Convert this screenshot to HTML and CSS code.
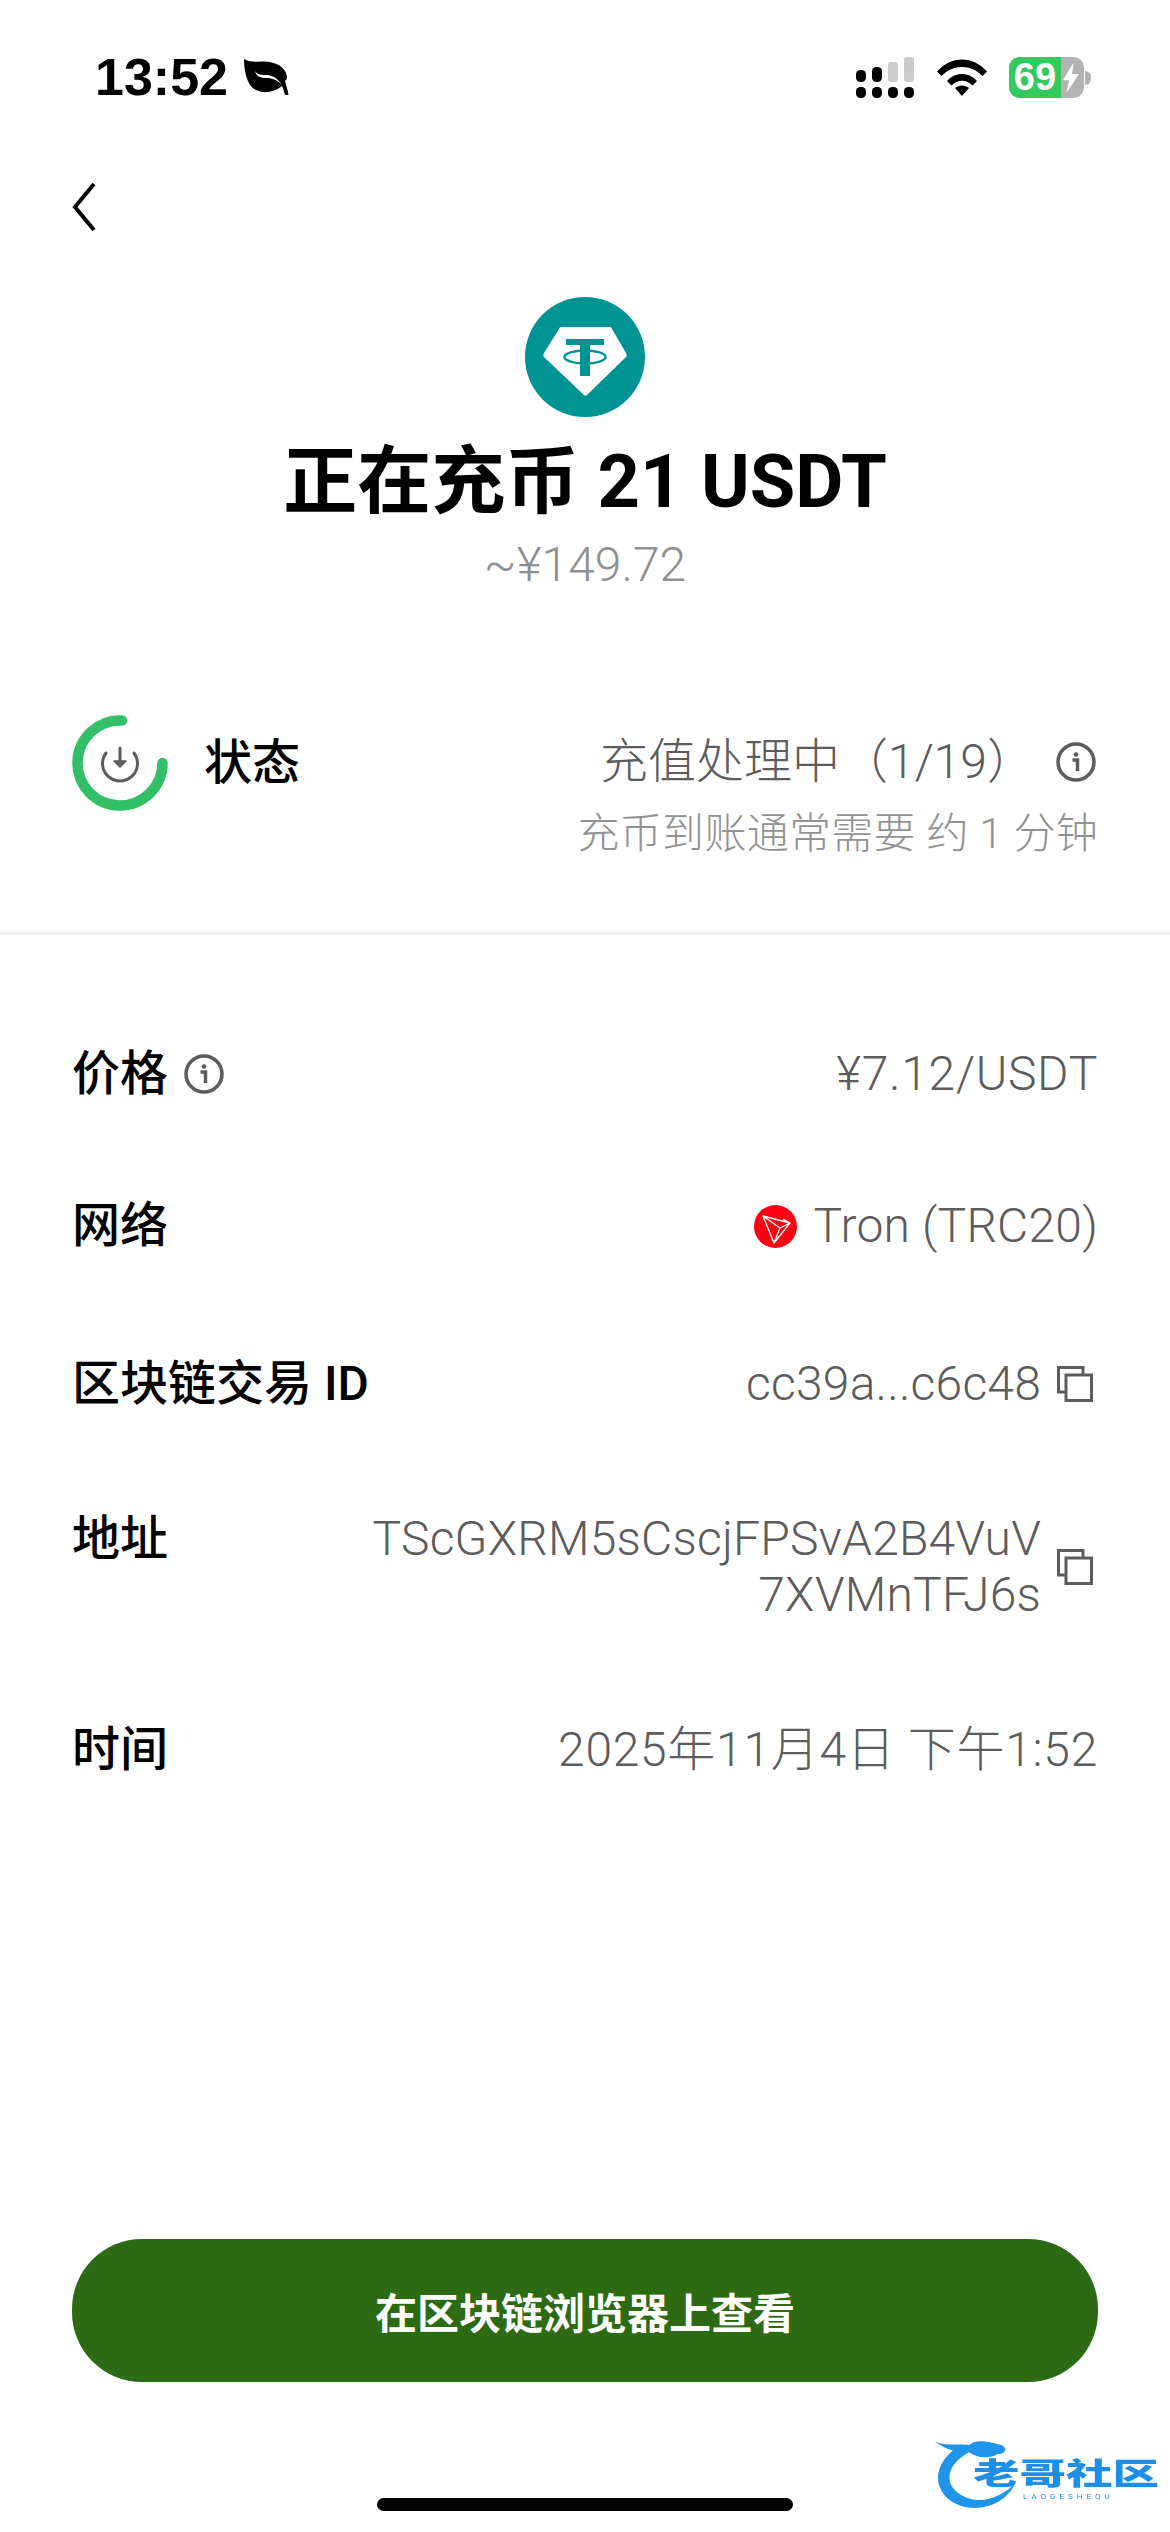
FILE: index.html
```html
<!DOCTYPE html>
<html lang="zh-CN">
<head>
	<meta charset="utf-8">
	<title>正在充币</title>
	<link rel="stylesheet" href="styles.css">
</head>
<body>
	<div class="page">

		<div class="statusbar">
			<div class="clock">
				<span class="clock-time">13:52</span>
				<svg class="leaf" viewBox="0 0 45 37"><path d="M0 0C5 3 10 3 18 2.500C30 2 42 7 43 18C43 20 42 21 41 22C42 26 44 31 44.500 36L41 36C40 33 40 31 38 27C30 34 18 35 10 30C3 25 0 12 0 0ZM11 12C13 16 18 16 24 16C30 17 34 20 38 26C33 21 29 19 22 19C16 19 12 17 11 12Z" fill="#000" fill-rule="evenodd"/></svg>
			</div>
			<div class="status-icons">
				<svg class="signal" viewBox="0 0 58 41">
					<rect x="0" y="13" width="10" height="12" rx="4.500" fill="#000"/>
					<rect x="16" y="10" width="10" height="15" rx="4.500" fill="#000"/>
					<rect x="32" y="5" width="10" height="20" rx="3" fill="#ccc"/>
					<rect x="48" y="0" width="10" height="25" rx="3" fill="#ccc"/>
					<rect x="0" y="30" width="10" height="11" rx="4.500" fill="#000"/>
					<rect x="16" y="30" width="10" height="11" rx="4.500" fill="#000"/>
					<rect x="32" y="30" width="10" height="11" rx="4.500" fill="#000"/>
					<rect x="48" y="30" width="10" height="11" rx="4.500" fill="#000"/>
				</svg>
				<svg class="wifi" viewBox="0 0 50 37">
					<path d="M0 12.500C14 -3.500 36 -3.500 50 12.500L45.500 17C34 5 16 5 4.500 17Z" fill="#000"/>
					<path d="M10 22C18 12.500 32 12.500 40 22L35.500 26.500C29.500 20 20.500 20 14.500 26.500Z" fill="#000"/>
					<path d="M18 29C22 25.500 28 25.500 32 29L25 37Z" fill="#000"/>
				</svg>
				<div class="battery">
					<div class="battery-body">
						<div class="battery-fill">69</div>
						<svg class="bolt" viewBox="0 0 20 34"><path d="M13 0L1 20L8 20L5 34L19 13L11 13Z" fill="#fff"/></svg>
					</div>
					<div class="battery-nub"></div>
				</div>
			</div>
		</div>

		<div class="nav">
			<svg class="back" viewBox="0 0 24 48"><path d="M22 1L3 24L22 47" fill="none" stroke="#000" stroke-width="4"/></svg>
		</div>

		<div class="hero">
			<svg class="coin" viewBox="0 0 120 120">
				<circle cx="60" cy="60" r="60" fill="#009393"/>
				<path d="M36 30L85 30C86 30 87 31 87 32L101 56C102 58 102 59 101 60L62 98C61 99 60 99 59 98L19 60C18 59 18 58 19 56L34 32C34 31 35 30 36 30Z" fill="#fff"/>
				<path d="M41 42H79V48H65V79H55V48H41Z" fill="#009393"/>
				<ellipse cx="60" cy="60" rx="20.500" ry="6.500" fill="none" stroke="#009393" stroke-width="2.500"/>
			</svg>
			<h1 class="hero-title">正在充币 21 USDT</h1>
			<div class="hero-sub">~¥149.72</div>
		</div>

		<div class="state">
			<div class="state-left">
				<svg class="ring" viewBox="0 0 96 96">
					<path d="M50 5.500A42.500 42.500 0 1 0 90.500 48" fill="none" stroke="#32bf67" stroke-width="10.500" stroke-linecap="round"/>
					<path d="M34 38A17.500 17.500 0 1 0 62 38" fill="none" stroke="#5c5c5c" stroke-width="3" stroke-linecap="round"/>
					<path d="M48 33V50" fill="none" stroke="#5c5c5c" stroke-width="3" stroke-linecap="round"/>
					<path d="M42 46H54L48 52Z" fill="#5c5c5c" stroke="#5c5c5c" stroke-width="1.500" stroke-linejoin="round"/>
				</svg>
				<span class="state-label">状态</span>
			</div>
			<div class="state-right">
				<div class="state-value">
					<span>充值处理中（1/19）</span>
					<svg class="info" viewBox="0 0 40 40">
						<circle cx="20" cy="20" r="18" fill="none" stroke="#5c5c5c" stroke-width="3.500"/>
						<circle cx="20" cy="12.500" r="2.300" fill="#5c5c5c"/>
						<path d="M16.500 18H21.500V29" fill="none" stroke="#5c5c5c" stroke-width="3.500"/>
					</svg>
				</div>
				<div class="state-note">充币到账通常需要 约 1 分钟</div>
			</div>
		</div>

		<div class="divider"></div>

		<div class="details">
			<div class="row">
				<div class="row-label">
					<span>价格</span>
					<svg class="info" viewBox="0 0 40 40">
						<circle cx="20" cy="20" r="18" fill="none" stroke="#5c5c5c" stroke-width="3.500"/>
						<circle cx="20" cy="12.500" r="2.300" fill="#5c5c5c"/>
						<path d="M16.500 18H21.500V29" fill="none" stroke="#5c5c5c" stroke-width="3.500"/>
					</svg>
				</div>
				<div class="row-value row-value-wide">¥7.12/USDT</div>
			</div>
			<div class="row row-network">
				<div class="row-label">网络</div>
				<div class="row-value">
					<svg class="tron" viewBox="0 0 43 43">
						<circle cx="21.500" cy="21.500" r="21.500" fill="#ff0013"/>
						<path d="M9 11L36 18L20 38ZM9 11L26 23L36 18M26 23L20 38M29 14L36 18" fill="none" stroke="#fff" stroke-width="1.300" stroke-linejoin="round"/>
					</svg>
					<span>Tron (TRC20)</span>
				</div>
			</div>
			<div class="row">
				<div class="row-label">区块链交易 ID</div>
				<div class="row-value">
					<span>cc39a...c6c48</span>
					<svg class="copy" viewBox="0 0 36 36">
						<path d="M8 26H1.500V1.500H26V8" fill="none" stroke="#5c5c5c" stroke-width="3"/>
						<rect x="9" y="9" width="25.500" height="25.500" fill="none" stroke="#5c5c5c" stroke-width="3"/>
					</svg>
				</div>
			</div>
			<div class="row">
				<div class="row-label">地址</div>
				<div class="row-value">
					<span class="address">TScGXRM5sCscjFPSvA2B4VuV<br>7XVMnTFJ6s</span>
					<svg class="copy" viewBox="0 0 36 36">
						<path d="M8 26H1.500V1.500H26V8" fill="none" stroke="#5c5c5c" stroke-width="3"/>
						<rect x="9" y="9" width="25.500" height="25.500" fill="none" stroke="#5c5c5c" stroke-width="3"/>
					</svg>
				</div>
			</div>
			<div class="row">
				<div class="row-label">时间</div>
				<div class="row-value row-value-wide">2025年11月4日 下午1:52</div>
			</div>
		</div>

		<div class="action">在区块链浏览器上查看</div>
		<div class="home-bar"></div>

		<div class="watermark">
			<svg class="dragon" viewBox="0 0 100 80">
				<path d="M2 6C16 12 30 8 40 10C50 2 66 8 76 10C84 14 80 20 72 20C62 26 48 24 40 18C16 30 8 56 36 68C56 76 76 68 92 52C80 76 54 84 32 78C2 68 -4 38 22 16C14 14 8 10 2 6Z" fill="#1e94ea"/>
			</svg>
			<div class="mark-name">老哥社区</div>
			<div class="mark-latin">LAOGESHEQU</div>
		</div>

	</div>
</body>
</html>
```

FILE: styles.css
```css
* {
	box-sizing: border-box;
}

body {
	margin: 0;
	background: #fff;
	font-family: Roboto, "Noto Sans CJK SC", sans-serif;
	color: #000;
}

.page {
	position: relative;
	display: flex;
	flex-direction: column;
	width: 1170px;
	height: 2532px;
	overflow: hidden;
}

/* status bar */

.statusbar {
	display: flex;
	justify-content: space-between;
	align-items: flex-start;
	height: 150px;
	padding: 57px 79px 0 95px;
}

.clock {
	display: flex;
	align-items: center;
	gap: 16px;
}

.clock-time {
	font-family: "Liberation Sans", sans-serif;
	font-size: 52px;
	line-height: 41px;
	font-weight: 700;
}

.leaf {
	width: 45px;
	height: 37px;
}

.status-icons {
	display: flex;
	align-items: flex-start;
}

.signal {
	width: 58px;
	height: 41px;
	margin-right: 23px;
}

.wifi {
	width: 50px;
	height: 37px;
	margin: 2px 22px 0 0;
}

.battery {
	display: flex;
	align-items: center;
}

.battery-body {
	display: flex;
	width: 75px;
	height: 41px;
	border-radius: 11px;
	overflow: hidden;
	background: #b3b3b3;
}

.battery-fill {
	display: flex;
	justify-content: center;
	align-items: center;
	width: 52px;
	background: #34c95c;
	color: #fff;
	font-family: "Liberation Sans", sans-serif;
	font-size: 38px;
	font-weight: 700;
}

.bolt {
	width: 18px;
	height: 31px;
	margin: 5px 0 0 1px;
}

.battery-nub {
	width: 6px;
	height: 14px;
	border-radius: 0 7px 7px 0;
	background: #b3b3b3;
	margin-left: 1px;
}

/* nav */

.nav {
	display: flex;
	align-items: flex-start;
	height: 147px;
	padding: 33px 0 0 72px;
}

.back {
	width: 24px;
	height: 48px;
}

/* hero */

.hero {
	display: flex;
	flex-direction: column;
	align-items: center;
	height: 296px;
}

.coin {
	width: 120px;
	height: 120px;
}

.hero-title {
	margin: 23px 0 0;
	font-size: 74px;
	line-height: 84px;
	font-weight: 700;
}

.hero-sub {
	margin-top: 13px;
	font-size: 48px;
	line-height: 56px;
	font-weight: 300;
	color: #8f8f8f;
}

/* state */

.state {
	display: flex;
	justify-content: space-between;
	align-items: flex-start;
	height: 217px;
	margin-top: 122px;
	padding: 0 72px;
}

.state-left {
	display: flex;
	align-items: center;
	gap: 36px;
}

.ring {
	width: 96px;
	height: 96px;
}

.state-label {
	font-size: 48px;
	line-height: 56px;
	font-weight: 500;
}

.state-right {
	display: flex;
	flex-direction: column;
	align-items: flex-end;
	padding-top: 19px;
}

.state-value {
	display: flex;
	align-items: center;
	gap: 21px;
	padding-right: 2px;
	font-size: 48px;
	line-height: 56px;
	font-weight: 300;
	color: #5c5c5c;
}

.state-note {
	margin-top: 16px;
	font-size: 42px;
	line-height: 56px;
	font-weight: 300;
	letter-spacing: 0.3px;
	color: #929292;
}

.info {
	width: 40px;
	height: 40px;
	flex-shrink: 0;
}

.divider {
	height: 3px;
	background: #f0f0f0;
}

/* detail rows */

.details {
	display: flex;
	flex-direction: column;
	gap: 99px;
	padding: 111px 72px 0;
}

.row {
	display: flex;
	justify-content: space-between;
	align-items: flex-start;
	font-size: 48px;
	line-height: 56px;
}

.row-network {
	margin: -3px 0 3px;
}

.row-label {
	display: flex;
	align-items: center;
	gap: 16px;
	font-weight: 500;
}

.row-value {
	display: flex;
	align-items: center;
	gap: 16px;
	color: #5c5c5c;
	font-weight: 300;
	letter-spacing: 0.2px;
}

.row-value-wide {
	letter-spacing: 0.7px;
}

.address {
	text-align: right;
}

.tron {
	width: 43px;
	height: 43px;
}

.copy {
	width: 36px;
	height: 36px;
	margin-right: 5px;
}

/* button */

.action {
	display: flex;
	justify-content: center;
	align-items: center;
	height: 143px;
	margin: auto 72px 116px;
	border-radius: 70px;
	background: #2d6a14;
	color: #fff;
	font-size: 42px;
	font-weight: 700;
}

.home-bar {
	width: 416px;
	height: 13px;
	margin: 0 auto 21px;
	border-radius: 7px;
	background: #000;
}

/* watermark sits over the page corner */

.watermark {
	position: absolute;
	left: 930px;
	top: 2436px;
	width: 230px;
	height: 72px;
	filter: blur(0.7px);
}

.dragon {
	position: absolute;
	left: 0;
	top: 0;
	width: 96px;
	height: 72px;
}

.mark-name {
	position: absolute;
	left: 43px;
	top: 22px;
	font-size: 30px;
	line-height: 32px;
	font-weight: 900;
	white-space: nowrap;
	color: #1e8fe8;
	transform: scaleX(1.55);
	transform-origin: left center;
}

.mark-latin {
	position: absolute;
	left: 93px;
	top: 56px;
	font-size: 8px;
	line-height: 9px;
	letter-spacing: 4px;
	color: #1e8fe8;
	white-space: nowrap;
}
```
